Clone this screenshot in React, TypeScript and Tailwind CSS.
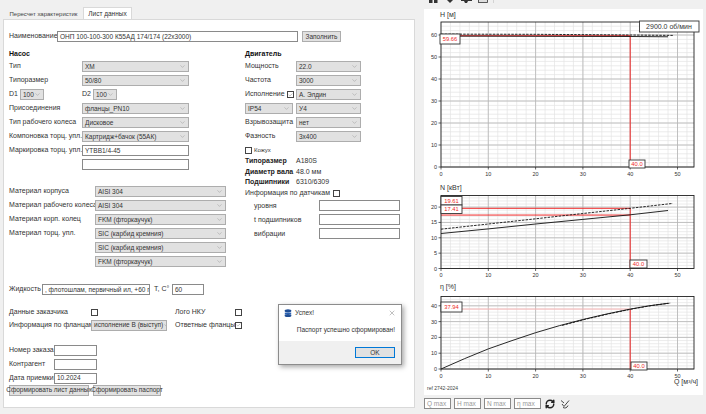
import type { ReactNode } from "react";
import { ChevronDown, RefreshCw, X, Check } from "lucide-react";

const font = { fontFamily: '"Liberation Sans", Arial, sans-serif' };

// select look-alike
const Sel = ({ value, className = "" }: { value?: string; className?: string }) => (
  <div className={`h-[11px] shrink-0 bg-[#e1e1e1] border border-[#adadad] flex items-center justify-between pl-[2px] pr-[2px] overflow-hidden whitespace-nowrap ${className}`}>
    <span className="text-[6.5px] text-[#333]">{value}</span>
    <ChevronDown size={7} strokeWidth={1} className="text-[#666] shrink-0" />
  </div>
);

const Inp = ({ value, className = "" }: { value?: string; className?: string }) => (
  <div className={`h-[11px] shrink-0 bg-white border border-[#8a8a8a] flex items-center pl-[2px] overflow-hidden whitespace-nowrap text-[6.5px] text-[#333] ${className}`}>
    {value}
  </div>
);

const Chk = ({ checked = false }: { checked?: boolean }) => (
  <div className="w-[7px] h-[7px] shrink-0 bg-white border border-[#444] flex items-center justify-center">
    {checked && <Check size={6} strokeWidth={1.5} className="text-[#444]" />}
  </div>
);

const Row = ({ children, className = "" }: { children: ReactNode; className?: string }) => (
  <div className={`h-[11px] mb-[3px] flex items-center whitespace-nowrap ${className}`}>{children}</div>
);

const PumpRow = ({ label, value }: { label: string; value: string }) => (
  <Row>
    <span className="w-[73px] shrink-0">{label}</span>
    <Sel value={value} className="w-[107px]" />
  </Row>
);

const MaterialRow = ({ label, value }: { label?: string; value: string }) => (
  <Row>
    <span className="w-[86px] shrink-0">{label}</span>
    <Sel value={value} className="w-[131px]" />
  </Row>
);

const MotorRow = ({ label, value }: { label: string; value: string }) => (
  <Row>
    <span className="w-[51px] shrink-0">{label}</span>
    <Sel value={value} className="w-[65px]" />
  </Row>
);

const SensorRow = ({ label }: { label: string }) => (
  <Row>
    <span className="w-[74px] pl-[9px] shrink-0">{label}</span>
    <Inp className="w-[81px]" />
  </Row>
);

const InfoLine = ({ label, value }: { label: string; value: string }) => (
  <div className="h-[10.6px] flex items-center whitespace-nowrap">
    <span className="w-[51px] shrink-0 font-bold text-[#222]">{label}</span>
    <span>{value}</span>
  </div>
);

const OrderRow = ({ label, value }: { label: string; value?: string }) => (
  <Row>
    <span className="w-[45px] shrink-0">{label}</span>
    <Inp value={value} className="w-[43px]" />
  </Row>
);

const Btn = ({ label, className = "" }: { label: string; className?: string }) => (
  <div className={`h-[11px] bg-[#e1e1e1] border border-[#adadad] flex items-center justify-center text-[6.5px] text-[#333] whitespace-nowrap ${className}`}>
    {label}
  </div>
);

// --- charts: drawn in page coordinates minus the panel's left edge ---
const PX0 = 17; // x of Q=0 inside the svg
const PW = 253;
const QS = 4.73;
const qx = (q: number) => PX0 + q * QS;

type Curve = { pts: [number, number][]; dashed?: boolean };
type Tag = { text: string; x: number; y: number; w: number; h: number };

type PlotProps = {
  height: number;
  top: number;
  bottom: number;
  scale: number;
  yTicks: number[];
  yMinor: number;
  title: string;
  titleY: number;
  curves: Curve[];
  reds: { y: number; color?: string }[];
  tags: Tag[];
  children?: ReactNode;
};

const Plot = ({ height, top, bottom, scale, yTicks, yMinor, title, titleY, curves, reds, tags, children }: PlotProps) => {
  const vy = (v: number) => bottom - v * scale;
  const xMinor: number[] = [];
  for (let q = 0; q <= 52; q += 2) xMinor.push(q);
  const yMinorLines: number[] = [];
  for (let v = 0; vy(v) > top; v += yMinor) yMinorLines.push(v);
  const path = (c: Curve) => c.pts.map((p, i) => `${i ? "L" : "M"}${qx(p[0]).toFixed(1)} ${vy(p[1]).toFixed(1)}`).join(" ");

  return (
    <svg width={279} height={height} className="block shrink-0" style={font}>
      <text x={PX0 - 1} y={titleY} fontSize={7} fill="#333">{title}</text>
      {xMinor.map((q) => (
        <line key={q} x1={qx(q)} x2={qx(q)} y1={top} y2={bottom} stroke="#e4e4e4" strokeWidth={0.7} />
      ))}
      {yMinorLines.map((v) => (
        <line key={v} x1={PX0} x2={PX0 + PW} y1={vy(v)} y2={vy(v)} stroke="#e4e4e4" strokeWidth={0.7} />
      ))}
      {[10, 20, 30, 40, 50].map((q) => (
        <line key={q} x1={qx(q)} x2={qx(q)} y1={top} y2={bottom} stroke="#b5b5b5" strokeWidth={0.8} />
      ))}
      {yTicks.map((v) => (
        <line key={v} x1={PX0} x2={PX0 + PW} y1={vy(v)} y2={vy(v)} stroke="#b5b5b5" strokeWidth={0.8} />
      ))}
      {reds.map((r) => (
        <line key={r.y} x1={PX0} x2={qx(40)} y1={vy(r.y)} y2={vy(r.y)} stroke={r.color ?? "#f02b2b"} strokeWidth={1} />
      ))}
      <line x1={qx(40)} x2={qx(40)} y1={vy(reds[0].y)} y2={bottom} stroke="#f02b2b" strokeWidth={1} />
      {curves.map((c, i) => (
        <path key={i} d={path(c)} fill="none" stroke="#111" strokeWidth={0.9} strokeDasharray={c.dashed ? "2.5 1.2" : undefined} />
      ))}
      <rect x={PX0} y={top} width={PW} height={bottom - top} fill="none" stroke="#222" strokeWidth={0.9} />
      {yTicks.map((v) => (
        <g key={v}>
          <line x1={PX0 - 2.5} x2={PX0} y1={vy(v)} y2={vy(v)} stroke="#222" strokeWidth={0.7} />
          <text x={PX0 - 4} y={vy(v) + 2} fontSize={5.5} fill="#333" textAnchor="end">{v}</text>
        </g>
      ))}
      {[0, 10, 20, 30, 40, 50].map((q) => (
        <g key={q}>
          <line x1={qx(q)} x2={qx(q)} y1={bottom} y2={bottom + 2.5} stroke="#222" strokeWidth={0.7} />
          <text x={qx(q)} y={bottom + 8.5} fontSize={5.5} fill="#333" textAnchor="middle">{q}</text>
        </g>
      ))}
      {tags.map((t) => (
        <g key={t.text + t.y}>
          <rect x={t.x} y={t.y} width={t.w} height={t.h} fill="#fff" stroke="#333" strokeWidth={0.9} />
          <text x={t.x + t.w / 2} y={t.y + t.h / 2 + 2} fontSize={5.8} fill="#ee2a2a" textAnchor="middle">{t.text}</text>
        </g>
      ))}
      {children}
    </svg>
  );
};

const headCurve: [number, number][] = [[0, 59.5], [20, 59.4], [40, 59.3], [48, 59.2]];
const headCurve2: [number, number][] = [[0, 60.4], [20, 60.3], [40, 60], [49, 59.8]];
const powerCurve: [number, number][] = [[0, 11.4], [10, 12.9], [20, 14.5], [30, 16], [40, 17.5], [48, 18.9]];
const powerCurve2: [number, number][] = [[0, 12.8], [10, 14.5], [20, 16.2], [30, 17.9], [40, 19.6], [49, 21.2]];
const etaCurve: [number, number][] = [[0, 0], [5, 6.6], [10, 12.7], [15, 18], [20, 23], [25, 27.4], [30, 31.3], [35, 34.8], [40, 37.9], [44, 40], [48, 41.6]];

export default function App() {
  return (
    <div className="relative w-[706px] h-[414px] bg-[#f0f0f0] overflow-hidden flex text-[7px] text-[#333]" style={font}>
      {/* left part: tabs and form */}
      <div className="ml-[3px] w-[412px] flex flex-col pt-[7px] shrink-0">
        <div className="flex h-[12px] pl-[1px] items-end">
          <div className="w-[79px] h-[10px] flex items-center justify-center text-[6px] text-[#444]">Пересчет характеристик</div>
          <div className="w-[49px] h-[12px] bg-white border border-b-0 border-[#d9d9d9] flex items-center justify-center text-[6.5px]">Лист данных</div>
        </div>
        <div className="h-[389px] bg-white border border-[#d9d9d9] pl-[5px] pt-[11px]">
          <div className="flex items-center h-[11px]">
            <span className="w-[48px] shrink-0">Наименование</span>
            <Inp value="ОНП 100-100-300 К55АД 174/174 (22х3000)" className="w-[241px]" />
            <Btn label="Заполнить" className="w-[39px] ml-[4px]" />
          </div>

          <div className="flex mt-[7px]">
            <div className="w-[236px] shrink-0">
              <div className="h-[12px] font-bold text-[#111]">Насос</div>
              <PumpRow label="Тип" value="ХМ" />
              <PumpRow label="Типоразмер" value="50/80" />
              <Row>
                <span className="w-[11px] shrink-0">D1</span>
                <Sel value="100" className="w-[24px]" />
                <span className="ml-[38px] w-[11px] shrink-0">D2</span>
                <Sel value="100" className="w-[24px]" />
              </Row>
              <PumpRow label="Присоединения" value="фланцы_PN10" />
              <PumpRow label="Тип рабочего колеса" value="Дисковое" />
              <PumpRow label="Компоновка торц. упл." value="Картридж+бачок (55АК)" />
              <Row>
                <span className="w-[73px] shrink-0">Маркировка торц. упл.</span>
                <Inp value="YTBB1/4-45" className="w-[107px]" />
              </Row>
              <Row>
                <span className="w-[73px] shrink-0" />
                <Inp className="w-[107px]" />
              </Row>

              <div className="mt-[16px]">
                <MaterialRow label="Материал корпуса" value="AISI 304" />
                <MaterialRow label="Материал рабочего колеса" value="AISI 304" />
                <MaterialRow label="Материал корп. колец" value="FKM (фторкаучук)" />
                <MaterialRow label="Материал торц. упл." value="SIC (карбид кремния)" />
                <MaterialRow value="SIC (карбид кремния)" />
                <MaterialRow value="FKM (фторкаучук)" />
              </div>
            </div>

            <div>
              <div className="h-[12px] font-bold text-[#111]">Двигатель</div>
              <MotorRow label="Мощность" value="22.0" />
              <MotorRow label="Частота" value="3000" />
              <Row>
                <span className="w-[42px] shrink-0">Исполнение</span>
                <Chk checked />
                <Sel value="А. Элдин" className="w-[65px] ml-[2px]" />
              </Row>
              <Row>
                <Sel value="IP54" className="w-[48px]" />
                <Sel value="У4" className="w-[65px] ml-[3px]" />
              </Row>
              <MotorRow label="Взрывозащита" value="нет" />
              <MotorRow label="Фазность" value="3х400" />
              <Row className="gap-[2px] text-[6px]">
                <Chk />
                <span>Кожух</span>
              </Row>
              <div className="-mt-[3px]">
                <InfoLine label="Типоразмер" value="A180S" />
                <InfoLine label="Диаметр вала" value="48.0 мм" />
                <InfoLine label="Подшипники" value="6310/6309" />
              </div>
              <div className="h-[10.6px] flex items-center gap-[3px] whitespace-nowrap mb-[2px]">
                <span>Информация по датчикам</span>
                <Chk />
              </div>
              <SensorRow label="уровня" />
              <SensorRow label="t подшипников" />
              <SensorRow label="вибрации" />
            </div>
          </div>

          <div className="flex items-center h-[11px] mt-[14px]">
            <span className="w-[33px] shrink-0">Жидкость</span>
            <Inp value=", флотошлам, первичный ил, +60 гр.С" className="w-[108px]" />
            <span className="ml-[4px] w-[18px] shrink-0">T, C°</span>
            <Inp value="60" className="w-[32px]" />
          </div>

          <div className="grid grid-cols-[82px_84px_60px_auto] items-center mt-[12px] gap-y-[2px] w-[240px] whitespace-nowrap">
            <span className="h-[10px] flex items-center">Данные заказчика</span>
            <Chk />
            <span>Лого НКУ</span>
            <Chk />
            <span className="h-[11px] flex items-center">Информация по фланцам</span>
            <Sel value="исполнение В (выступ)" className="w-[76px]" />
            <span>Ответные фланцы</span>
            <Chk checked />
          </div>

          <div className="mt-[14px]">
            <OrderRow label="Номер заказа" />
            <OrderRow label="Контрагент" />
            <OrderRow label="Дата приемки" value="10.2024" />
          </div>
          <div className="flex gap-[4px] -mt-[2px]">
            <Btn label="Сформировать лист данных" className="w-[80px]" />
            <Btn label="Сформировать паспорт" className="w-[68px]" />
          </div>
        </div>
      </div>

      {/* right part: toolbar, charts, limits */}
      <div className="ml-[9px] w-[279px] shrink-0 flex flex-col">
        <div className="h-[9px] relative">
          <svg width={80} height={4} className="block">
            <rect x={5} y={0} width={3.5} height={3} fill="#333" />
            <rect x={10} y={0} width={3.5} height={3} fill="#333" />
            <path d="M23 0h6l-3 3z" fill="#333" />
            <path d="M37 0h11v1h-4l-1 2h-2l-1-2h-3z" fill="#333" />
            <rect x={54.5} y={-2} width={9} height={4.5} fill="#ddd" stroke="#333" strokeWidth={0.8} />
            <line x1={69.5} x2={69.5} y1={0} y2={3} stroke="#ccc" strokeWidth={0.8} />
          </svg>
        </div>
        <div className="h-[386px] bg-white flex flex-col">
          <Plot
            height={168}
            top={13}
            bottom={158}
            scale={2.2}
            yTicks={[0, 10, 20, 30, 40, 50, 60]}
            yMinor={2}
            title="H [м]"
            titleY={7.5}
            curves={[{ pts: headCurve }, { pts: headCurve2, dashed: true }]}
            reds={[{ y: 59.66 }]}
            tags={[
              { text: "59.66", x: 16, y: 25, w: 20, h: 10 },
              { text: "40.0", x: 205, y: 151, w: 16, h: 8 },
            ]}
          >
            <rect x={215.5} y={12} width={59.5} height={11} fill="#fff" stroke="#333" strokeWidth={0.9} />
            <text x={245} y={20} fontSize={7} fill="#333" textAnchor="middle">2900.0 об/мин</text>
          </Plot>
          <Plot
            height={101}
            top={18.5}
            bottom={91.5}
            scale={3.07}
            yTicks={[0, 5, 10, 15, 20]}
            yMinor={1}
            title="N [кВт]"
            titleY={13}
            curves={[{ pts: powerCurve }, { pts: powerCurve2, dashed: true }]}
            reds={[{ y: 19.61 }, { y: 17.41 }]}
            tags={[
              { text: "19.61", x: 17, y: 19.5, w: 21, h: 8.5 },
              { text: "17.41", x: 17, y: 28, w: 21, h: 8.5 },
              { text: "40.0", x: 206, y: 83, w: 17, h: 8 },
            ]}
          />
          <Plot
            height={117}
            top={18.5}
            bottom={91}
            scale={1.58}
            yTicks={[0, 10, 20, 30, 40]}
            yMinor={2}
            title="η [%]"
            titleY={11}
            curves={[{ pts: etaCurve }, { pts: etaCurve.map(([q, v]) => [q + 0.6, v + 0.2] as [number, number]).slice(5), dashed: true }]}
            reds={[{ y: 37.94, color: "#f7b4b4" }]}
            tags={[
              { text: "37.94", x: 17, y: 24, w: 21, h: 10 },
              { text: "40.0", x: 207, y: 84, w: 16, h: 8 },
            ]}
          >
            <text x={3} y={112} fontSize={5} fill="#444">ref 2742-2024</text>
            <text x={274} y={106} fontSize={7} fill="#333" textAnchor="end">Q [м³/ч]</text>
          </Plot>
        </div>
        <div className="flex items-center gap-[3px] mt-[3px]">
          <Inp value="Q max" className="w-[27px] text-[#999]" />
          <Inp value="H max" className="w-[27px] text-[#999]" />
          <Inp value="N max" className="w-[27px] text-[#999]" />
          <Inp value="η max" className="w-[27px] text-[#999]" />
          <RefreshCw size={10} strokeWidth={3.5} className="text-[#222] ml-[1px]" />
          <svg width={10} height={10} viewBox="0 0 10 10" className="ml-[2px]" fill="none" stroke="#333" strokeWidth={0.9}>
            <path d="M1 1.5l3 2.5M9 1.5L4 7.5 2 5M3 8.5c2 1 4 .5 5-2" />
          </svg>
        </div>
      </div>

      {/* message box over the form */}
      <div className="absolute left-[278px] top-[304px] w-[124px] h-[61px] bg-white border border-[#8c8c8c] shadow-[2px_2px_5px_rgba(0,0,0,0.35)] flex flex-col">
        <div className="h-[15px] flex items-center pl-[5px] pr-[5px] gap-[3px] text-[6.5px]">
          <svg width={8} height={8} viewBox="0 0 8 8">
            <ellipse cx={4} cy={1.8} rx={3.4} ry={1.6} fill="#1f4e96" />
            <rect x={0.8} y={3.6} width={6.4} height={1.8} fill="#2a62b5" />
            <ellipse cx={4} cy={6.4} rx={3.4} ry={1.5} fill="#1f4e96" />
          </svg>
          <span className="flex-1">Успех!</span>
          <X size={8} strokeWidth={1} className="text-[#444]" />
        </div>
        <div className="flex-1 flex items-center justify-end pr-[6px] text-[6.5px] whitespace-nowrap pb-[1px]">Паспорт успешно сформирован!</div>
        <div className="h-[23px] bg-[#f0f0f0] flex items-center justify-end pr-[6px]">
          <div className="w-[40px] h-[11px] bg-[#e1e1e1] border border-[#0078d7] flex items-center justify-center text-[6.5px]">OK</div>
        </div>
      </div>
    </div>
  );
}
